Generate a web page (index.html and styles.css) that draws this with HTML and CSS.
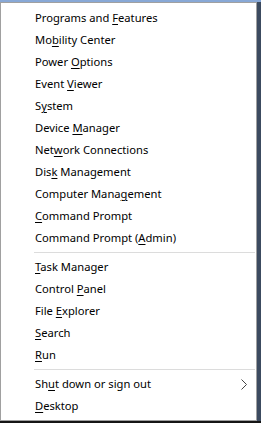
FILE: index.html
```html
<!DOCTYPE html>
<html lang="en">
<head>
  <meta charset="UTF-8" />
  <title>Quick Link Menu</title>
  <link rel="stylesheet" href="styles.css">
</head>
<body>

  <div class="menu">
    <div class="item">Programs and <u>F</u>eatures</div>
    <div class="item">Mo<u>b</u>ility Center</div>
    <div class="item">Power <u>O</u>ptions</div>
    <div class="item">Event <u>V</u>iewer</div>
    <div class="item">S<u>y</u>stem</div>
    <div class="item">Device <u>M</u>anager</div>
    <div class="item">Net<u>w</u>ork Connections</div>
    <div class="item">Dis<u>k</u> Management</div>
    <div class="item">Computer Mana<u>g</u>ement</div>
    <div class="item"><u>C</u>ommand Prompt</div>
    <div class="item">Command Prompt (<u>A</u>dmin)</div>
    <div class="sep"></div>
    <div class="item"><u>T</u>ask Manager</div>
    <div class="item">Control <u>P</u>anel</div>
    <div class="item">File <u>E</u>xplorer</div>
    <div class="item"><u>S</u>earch</div>
    <div class="item"><u>R</u>un</div>
    <div class="sep"></div>
    <div class="item has-sub">
      <span>Sh<u>u</u>t down or sign out</span>
      <svg class="chevron" width="6" height="11" viewBox="0 0 6 11">
        <polyline points="0.5,0.5 5.5,5.5 0.5,10.5" fill="none" stroke="#444" stroke-width="1" />
      </svg>
    </div>
    <div class="item"><u>D</u>esktop</div>
  </div>

</body>
</html>
```

FILE: styles.css
```css
html, body {
  height: 100%;
}
body {
  margin: 0;
  background: linear-gradient(#88a8d6 0, #88a8d6 2px, #3c4b60 2px, #3c4b60 421px, #151515 421px);
  font-family: "Segoe UI", "Noto Sans", sans-serif;
  font-size: 11.2px;
  color: #000;
}
.menu {
  margin-top: 2px;
  width: 257px;
  height: 419px;
  box-sizing: border-box;
  background-color: #fff;
  border: 1px solid #a0a0a0;
  padding: 4px 0 3px 0;
}
.item {
  height: 22px;
  line-height: 22px;
  padding-left: 34px;
  white-space: nowrap;
}
.item u {
  text-decoration-thickness: 1px;
  text-underline-offset: 2px;
}
.has-sub {
  display: flex;
  align-items: center;
  justify-content: space-between;
  padding-right: 9px;
}
.chevron {
  display: block;
}
.sep {
  height: 1px;
  margin: 3px 1px 3px 33px;
  background-color: #dcdcdc;
}
```
